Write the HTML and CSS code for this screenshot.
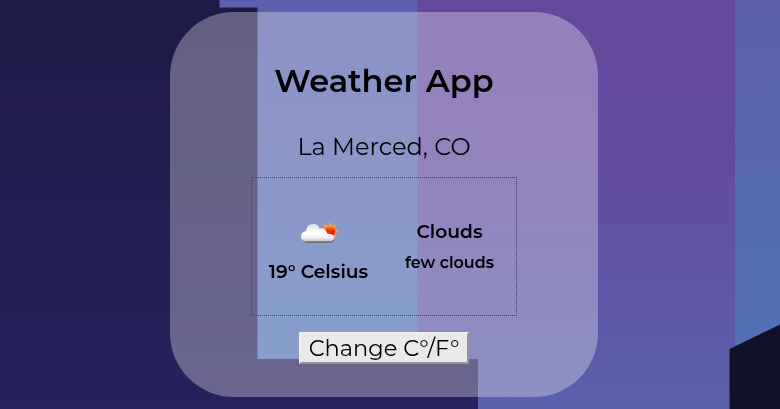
FILE: index.html
```html
<!DOCTYPE html>
<html lang="en">
<head>
<meta charset="utf-8">
<title>Weather App</title>
<link rel="stylesheet" href="styles.css">
</head>
<body>
<svg class="backdrop" viewBox="0 0 780 409" preserveAspectRatio="none" aria-hidden="true">
  <defs>
    <linearGradient id="night" x2="0" y2="1"><stop stop-color="#1e1a46"/><stop offset="1" stop-color="#27215e"/></linearGradient>
    <linearGradient id="blue" x2="0" y2="1"><stop stop-color="#5b60ac"/><stop offset="1" stop-color="#5174b5"/></linearGradient>
    <linearGradient id="purple" x2="0" y2="1"><stop stop-color="#66489c"/><stop offset=".4" stop-color="#634b9f"/><stop offset=".88" stop-color="#5b5ca9"/><stop offset="1" stop-color="#5961ad"/></linearGradient>
  </defs>
  <rect width="780" height="409" fill="url(#night)"/>
  <path d="M219.500 0H418V359H257.500V7.500H219.500Z" fill="url(#blue)"/>
  <path d="M417.500 0H735V409H478V359H417.500Z" fill="url(#purple)"/>
  <path d="M735 0H780V409H735Z" fill="url(#blue)"/>
  <path d="M729.500 349L780 324.500V409H729.500Z" fill="#11112b"/>
</svg>
<main class="card">
  <h1 class="title">Weather App</h1>
  <p class="city">La Merced, CO</p>
  <section class="weather">
    <div class="reading">
      <svg class="icon" viewBox="0 0 40 24" aria-hidden="true">
        <defs>
          <linearGradient id="cloud" x2="0" y2="1"><stop stop-color="#e5e1e8"/><stop offset=".55" stop-color="#fff"/><stop offset=".8" stop-color="#eee"/><stop offset="1" stop-color="#c0c0c0"/></linearGradient>
          <linearGradient id="sun" x2="0" y2="1"><stop stop-color="#ff9c22"/><stop offset=".5" stop-color="#f6250b"/><stop offset="1" stop-color="#ff1405"/></linearGradient>
        </defs>
        <path d="M30 .5l1.700 4 4.700-1.400-1.400 4.400 4.500 2.500-4.500 2.500 1.400 4.400-4.700-1.400-1.700 4-1.700-4-4.700 1.400 1.400-4.400-4.500-2.500 4.500-2.500-1.400-4.400 4.700 1.400Z" fill="#f9a13a"/>
        <circle cx="30" cy="10" r="5.300" fill="url(#sun)"/>
        <path d="M4 18h30v1.500q-1 2.500-4 2.500H8q-3 0-4-2.500Z" fill="#70727a"/>
        <path d="M6.500 20.300Q1 20 1 15.500 1 11 6 10 7 3 13 3q5.500 0 6.500 4.500 5-1.500 7 3.200l1 2q6.500 0 6.500 3.800 0 3.800-4 3.800Z" fill="url(#cloud)"/>
      </svg>
      <p class="temp">19° Celsius</p>
    </div>
    <div class="sky">
      <p class="main">Clouds</p>
      <p class="detail">few clouds</p>
    </div>
  </section>
  <button class="toggle" type="button">Change C°/F°</button>
</main>
</body>
</html>
```
FILE: styles.css
```css
* { box-sizing: border-box; }
body {
  margin: 0;
  height: 409px;
  padding: 12px 0 0 170px;
  overflow: hidden;
  background: #201b4c;
  color: #000;
  font-family: Montserrat, Inter, sans-serif;
}
.backdrop { position: fixed; inset: 0; width: 100%; height: 100%; z-index: -1; }
.card {
  width: 428px;
  height: 385px;
  display: flex;
  flex-direction: column;
  align-items: center;
  border-radius: 64px;
  background: rgba(255, 255, 255, .31);
}
h1, p { margin: 0; white-space: nowrap; }
.title { margin-top: 49px; font-size: 32px; line-height: 40px; font-weight: 600; }
.city { margin-top: 31px; font-size: 24px; line-height: 30px; font-weight: 400; }
.weather {
  width: 266px;
  height: 139px;
  margin-top: 15px;
  display: grid;
  grid-template-columns: 133px 129px;
  border: 1px dotted #56308c;
}
.reading, .sky { display: flex; flex-direction: column; align-items: center; }
.icon { width: 40px; height: 24px; margin: 43px 0 0 3px; }
.temp, .main { font-size: 18.720px; line-height: 24px; font-weight: 600; }
.temp { margin-top: 15px; }
.main { margin-top: 42px; }
.detail { margin-top: 9px; font-size: 16px; line-height: 20px; font-weight: 600; }
.toggle {
  width: 170px;
  height: 32px;
  margin-top: 16px;
  padding: 0;
  border: 2px solid;
  border-color: #eee #949494 #949494 #eee;
  background: #e9e9e9;
  color: #000;
  font: 400 22.500px/28px Montserrat, Inter, sans-serif;
  white-space: nowrap;
}
```
